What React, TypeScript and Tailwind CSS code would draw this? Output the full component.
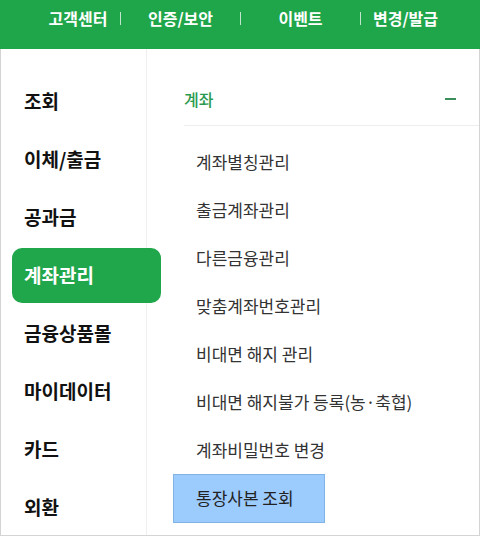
import React from 'react';

const CATEGORIES = ['조회', '이체/출금', '공과금', '계좌관리', '금융상품몰', '마이데이터', '카드', '외환'];

const SUB_ITEMS = [
    '계좌별칭관리',
    '출금계좌관리',
    '다른금융관리',
    '맞춤계좌번호관리',
    '비대면 해지 관리',
    '비대면 해지불가 등록(농·축협)',
    '계좌비밀번호 변경',
    '통장사본 조회',
];

export default function App() {
    const active = '계좌관리';
    const selected = '통장사본 조회';

    return (
        <div className="w-[480px] h-[536px] overflow-hidden bg-white font-['Noto_Sans_CJK_KR','Noto_Sans',sans-serif]">
            {/* top bar */}
            <div className="h-[49px] bg-[#1fa64a] pt-[6px]">
                <div className="flex items-center w-full h-[24px] text-white text-[16px] font-semibold leading-[24px]">
                    <span className="w-[120px] pl-[36px] text-center">고객센터</span>
                    <span className="w-px h-[13px] bg-[#bfe6cb]" />
                    <span className="w-[119px] text-center">인증/보안</span>
                    <span className="w-px h-[13px] bg-[#bfe6cb]" />
                    <span className="w-[119px] text-center">이벤트</span>
                    <span className="w-px h-[13px] bg-[#bfe6cb]" />
                    <span className="flex-1 pr-[30px] text-center">변경/발급</span>
                </div>
            </div>

            <div className="flex h-[487px] border-l border-r border-b border-[#d4d4d4]">
                {/* categories */}
                <div className="w-[146px] shrink-0 border-r border-[#efefef] pt-[23px] relative z-10">
                    {CATEGORIES.map(cat => (
                        <div key={cat} className="h-[58px] flex items-center">
                            {cat === active ? (
                                <div className="shrink-0 ml-[11px] w-[149px] h-[55px] rounded-[10px] bg-[#20a64b] flex items-center pl-[12px] text-white text-[19px] font-semibold">
                                    {cat}
                                </div>
                            ) : (
                                <div className="pl-[23px] text-[19px] font-semibold text-[#111]">{cat}</div>
                            )}
                        </div>
                    ))}
                </div>

                {/* sub menu */}
                <div className="flex-1 min-w-0">
                    <div className="ml-[37px] h-[77px] border-b border-[#eeeeee] flex items-center justify-between pt-[24px]">
                        <span className="text-[16px] font-medium text-[#2a9a50] leading-none">계좌</span>
                        <span className="w-[11px] h-[2px] bg-[#3a8f5a] mr-[23px]" />
                    </div>
                    <div className="pt-[12px]">
                        {SUB_ITEMS.map(item => (
                            <div key={item} className="h-[48px] flex items-center">
                                {item === selected ? (
                                    <div className="ml-[26px] w-[152px] h-[49px] bg-[#9ccbfd] border border-[#82b3e6] flex items-center pl-[22px] text-[17px] text-[#222]">
                                        {item}
                                    </div>
                                ) : (
                                    <div className="pl-[49px] text-[17px] text-[#333]">{item}</div>
                                )}
                            </div>
                        ))}
                    </div>
                </div>
            </div>
        </div>
    );
}
